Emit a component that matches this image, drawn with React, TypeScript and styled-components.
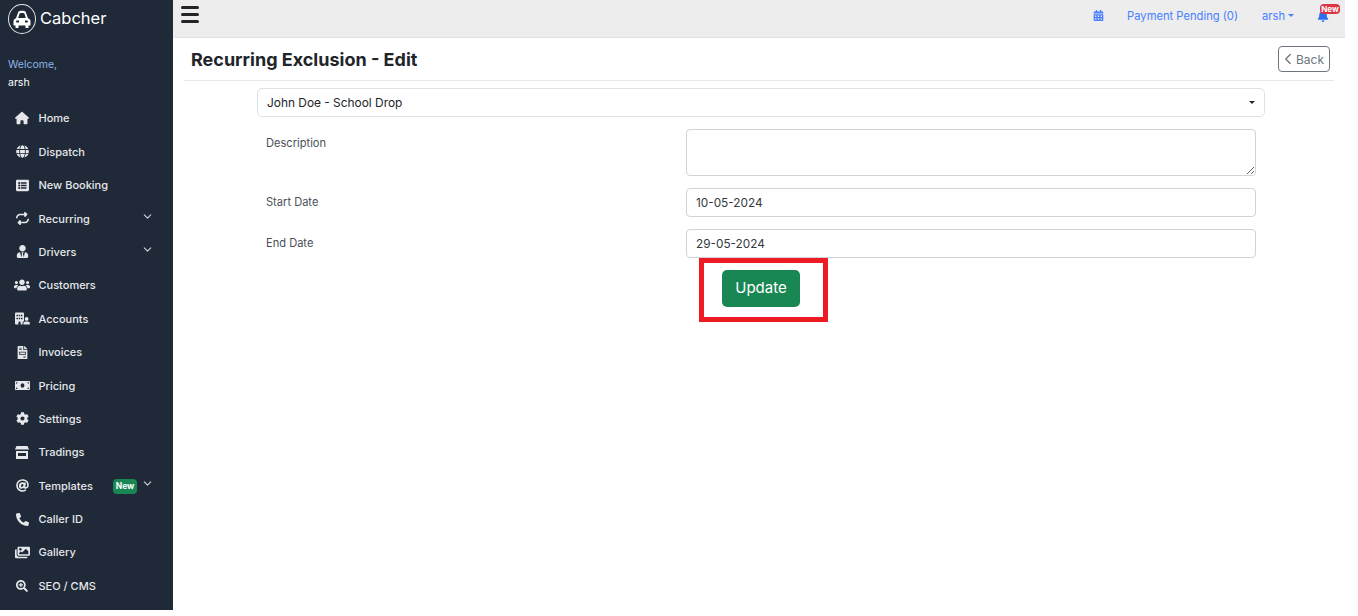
import { ReactNode } from "react";
import styled, { createGlobalStyle } from "styled-components";
import {
  FaAt,
  FaBell,
  FaCalendarAlt,
  FaCog,
  FaFileInvoice,
  FaGlobe,
  FaImages,
  FaListAlt,
  FaMoneyBill,
  FaPhoneAlt,
  FaSearchPlus,
  FaUserTie,
  FaUsers,
} from "react-icons/fa";
import { FaBuildingUser, FaHouse, FaRepeat } from "react-icons/fa6";
import { ChevronDown, ChevronLeft } from "lucide-react";

interface NavItem {
  label: string;
  icon: ReactNode;
  iconSize?: number;
  chevron?: boolean;
  badge?: string;
}

// front view car of the logo, the cabin is an arch over a wide body
const CarLogo = () => (
  <svg width="18" height="19" viewBox="0 0 18 19" fill="#fff">
    <path
      fillRule="evenodd"
      d="M5.5 1.5C6.5.6 11.500.6 12.500 1.500L15 8.200C16.600 8.700 17.500 9.800 17.500 11.200V15.500H15.500V18H12.500V15.500H5.500V18H2.500V15.500H.5V11.200C.5 9.800 1.400 8.700 3 8.200ZM6.600 3.400 5.200 8H12.800L11.400 3.400C10.500 3 7.500 3 6.600 3.400ZM3.200 10.500V12.500H6V10.500ZM12 10.500V12.500H14.800V10.500Z"
    />
  </svg>
);

const StoreIcon = () => (
  <svg width="14" height="13" viewBox="0 0 14 13" fill="currentColor">
    <path d="M1.500 0H12.500L14 3.500H0Z" />
    <path
      fillRule="evenodd"
      d="M1 5H13V13H1ZM3 7V10H11V7Z"
    />
  </svg>
);

const navItems: NavItem[] = [
  { label: "Home", icon: <FaHouse />, iconSize: 14 },
  { label: "Dispatch", icon: <FaGlobe /> },
  { label: "New Booking", icon: <FaListAlt /> },
  { label: "Recurring", icon: <FaRepeat />, chevron: true },
  { label: "Drivers", icon: <FaUserTie />, chevron: true },
  { label: "Customers", icon: <FaUsers />, iconSize: 16 },
  { label: "Accounts", icon: <FaBuildingUser />, iconSize: 15 },
  { label: "Invoices", icon: <FaFileInvoice /> },
  { label: "Pricing", icon: <FaMoneyBill />, iconSize: 15 },
  { label: "Settings", icon: <FaCog /> },
  { label: "Tradings", icon: <StoreIcon /> },
  { label: "Templates", icon: <FaAt />, chevron: true, badge: "New" },
  { label: "Caller ID", icon: <FaPhoneAlt /> },
  { label: "Gallery", icon: <FaImages />, iconSize: 15 },
  { label: "SEO / CMS", icon: <FaSearchPlus />, iconSize: 12 },
];

export default function App() {
  return (
    <>
      <GlobalStyle />
      <Shell>
        <Sidebar>
          <Brand>
            <BrandLogo>
              <CarLogo />
            </BrandLogo>
            <BrandName>Cabcher</BrandName>
          </Brand>
          <Welcome>
            <WelcomeLabel>Welcome,</WelcomeLabel>
            <WelcomeName>arsh</WelcomeName>
          </Welcome>
          <NavList>
            {navItems.map((item) => (
              <NavRow key={item.label}>
                <NavIcon $size={item.iconSize ?? 13}>{item.icon}</NavIcon>
                <NavLabel>{item.label}</NavLabel>
                {item.badge && <NavBadge>{item.badge}</NavBadge>}
                {item.chevron && (
                  <NavChevron>
                    <ChevronDown size={13} strokeWidth={2} />
                  </NavChevron>
                )}
              </NavRow>
            ))}
          </NavList>
        </Sidebar>

        <Main>
          <Topbar>
            <Hamburger>
              <span />
              <span />
              <span />
            </Hamburger>
            <TopLinks>
              <TopLink $gap={23}>
                <FaCalendarAlt size={11} />
              </TopLink>
              <TopLink $gap={24}>Payment Pending (0)</TopLink>
              <TopLink $gap={23}>
                arsh
                <Caret />
              </TopLink>
              <BellWrap>
                <FaBell size={12} />
                <BellBadge>New</BellBadge>
              </BellWrap>
            </TopLinks>
          </Topbar>

          <Content>
            <PageHeader>
              <PageTitle>Recurring Exclusion - Edit</PageTitle>
              <BackButton>
                <ChevronLeft size={18} strokeWidth={1.7} />
                Back
              </BackButton>
            </PageHeader>

            <FormArea>
              <SelectBox>
                John Doe - School Drop
                <SelectCaret />
              </SelectBox>

              <FormRow>
                <FieldLabel>Description</FieldLabel>
                <TextArea />
              </FormRow>
              <FormRow>
                <FieldLabel>Start Date</FieldLabel>
                <Input>10-05-2024</Input>
              </FormRow>
              <FormRow>
                <FieldLabel>End Date</FieldLabel>
                <Input>29-05-2024</Input>
              </FormRow>

              <ButtonRow>
                <Highlight>
                  <UpdateButton>Update</UpdateButton>
                </Highlight>
              </ButtonRow>
            </FormArea>
          </Content>
        </Main>
      </Shell>
    </>
  );
}

const GlobalStyle = createGlobalStyle`
  html, body {
    margin: 0;
    padding: 0;
    background: #fff;
    overflow: hidden;
  }
  body {
    font-family: Inter, "Liberation Sans", sans-serif;
    color: #212529;
  }
  * {
    box-sizing: border-box;
  }
`;

const Shell = styled.div`
  display: flex;
  width: 1345px;
  height: 610px;
  overflow: hidden;
`;

const Sidebar = styled.aside`
  flex: 0 0 173px;
  background: #1f2937;
  display: flex;
  flex-direction: column;
`;

const Brand = styled.div`
  display: flex;
  align-items: center;
  gap: 4px;
  padding: 4px 0 0 8px;
`;

const BrandLogo = styled.div`
  width: 28px;
  height: 30px;
  border: 1px solid #e5e7eb;
  border-radius: 50%;
  display: flex;
  align-items: center;
  justify-content: center;
`;

const BrandName = styled.span`
  font-size: 16.5px;
  line-height: 28px;
  color: #fff;
  margin-top: -2px;
`;

const Welcome = styled.div`
  padding: 22px 0 0 8px;
`;

const WelcomeLabel = styled.div`
  font-size: 10.5px;
  line-height: 18px;
  color: #8fb4e8;
`;

const WelcomeName = styled.div`
  font-size: 10.5px;
  line-height: 18px;
  color: #fff;
`;

const NavList = styled.nav`
  margin-top: 9.7px;
  display: flex;
  flex-direction: column;
`;

const NavRow = styled.div`
  position: relative;
  display: flex;
  align-items: center;
  height: 33.4px;
  padding-left: 14px;
  color: #e5e7eb;
`;

const NavIcon = styled.span<{ $size: number }>`
  width: 16px;
  margin-right: 8.5px;
  display: flex;
  justify-content: center;
  font-size: ${(p) => p.$size}px;
  color: #e5e7eb;
`;

const NavLabel = styled.span`
  font-size: 11px;
  font-weight: 500;
`;

const NavBadge = styled.span`
  position: absolute;
  left: 113px;
  top: 10px;
  width: 24px;
  height: 15px;
  border-radius: 4px;
  background: #198754;
  color: #fff;
  font-size: 8.5px;
  font-weight: 700;
  display: flex;
  align-items: center;
  justify-content: center;
`;

const NavChevron = styled.span`
  position: absolute;
  left: 141px;
  top: 8px;
  display: flex;
  color: #cbd5e1;
`;

const Main = styled.main`
  flex: 1;
  min-width: 0;
  display: flex;
  flex-direction: column;
`;

const Topbar = styled.header`
  height: 38px;
  background: #ededed;
  border-bottom: 1px solid #dee2e6;
  display: flex;
  align-items: center;
  justify-content: space-between;
  padding: 0 4px 8px 8px;
`;

const Hamburger = styled.div`
  width: 18px;
  display: flex;
  flex-direction: column;
  gap: 4px;

  span {
    display: block;
    height: 3px;
    border-radius: 2px;
    background: #212529;
  }
`;

const TopLinks = styled.div`
  display: flex;
  align-items: center;
  margin-top: 2px;
`;

const TopLink = styled.span<{ $gap: number }>`
  display: flex;
  align-items: center;
  margin-right: ${(p) => p.$gap}px;
  font-size: 11.2px;
  color: #4680ff;
`;

const Caret = styled.span`
  margin-left: 3px;
  border-top: 3.5px solid #4680ff;
  border-left: 3.5px solid transparent;
  border-right: 3.5px solid transparent;
`;

const BellWrap = styled.span`
  position: relative;
  display: flex;
  width: 24px;
  color: #2f6fed;
`;

const BellBadge = styled.span`
  position: absolute;
  left: 3px;
  top: -6px;
  width: 20px;
  height: 10px;
  border-radius: 4px;
  background: #dc3545;
  color: #fff;
  font-size: 8px;
  font-weight: 700;
  line-height: 10px;
  text-align: center;
`;

const Content = styled.div`
  padding: 0 11px 0 11px;
`;

const PageHeader = styled.div`
  height: 43px;
  border-bottom: 1px solid #e5e7eb;
  display: flex;
  align-items: center;
  justify-content: space-between;
  padding: 0 4px 0 7px;
`;

const PageTitle = styled.h1`
  margin: 0;
  font-size: 18px;
  font-weight: 700;
  color: #212529;
`;

const BackButton = styled.button`
  display: flex;
  align-items: center;
  height: 26px;
  width: 52px;
  padding: 0;
  gap: 0;
  background: #fff;
  border: 1px solid #6c757d;
  border-radius: 4px;
  color: #6c757d;
  font: 400 12px Inter, sans-serif;

  svg {
    margin-right: -1px;
  }
`;

const FormArea = styled.div`
  width: 1008px;
  margin: 7px 0 0 73px;
`;

const SelectBox = styled.div`
  position: relative;
  height: 29px;
  border: 1px solid #dee2e6;
  border-radius: 5px;
  background: #fff;
  font-size: 11.9px;
  line-height: 27px;
  padding-left: 9px;
  color: #212529;
`;

const SelectCaret = styled.span`
  position: absolute;
  right: 9px;
  top: 12px;
  border-top: 3.5px solid #212529;
  border-left: 3px solid transparent;
  border-right: 3px solid transparent;
`;

const FormRow = styled.div`
  display: grid;
  grid-template-columns: 429px 570px;
  margin-top: 12px;
`;

const FieldLabel = styled.label`
  font-size: 11.1px;
  line-height: 17px;
  padding: 6px 0 0 9px;
  color: #495057;
`;

const TextArea = styled.textarea`
  display: block;
  width: 570px;
  height: 47px;
  border: 1px solid #ced4da;
  border-radius: 4px;
  background: #fff;
  outline: none;
`;

const Input = styled.div`
  height: 29px;
  border: 1px solid #ced4da;
  border-radius: 4px;
  background: #fff;
  font-size: 11.8px;
  line-height: 28px;
  padding-left: 9px;
  color: #343a40;
`;

const ButtonRow = styled.div`
  display: flex;
  padding-left: 442px;
`;

const Highlight = styled.div`
  width: 129px;
  height: 64px;
  border: 5px solid #ed1c24;
  padding: 7px 0 0 18px;
`;

const UpdateButton = styled.button`
  display: block;
  width: 78px;
  height: 37px;
  padding: 0 0 2px;
  border: none;
  border-radius: 5px;
  background: #198754;
  color: #fff;
  font: 400 15px Inter, sans-serif;
`;
